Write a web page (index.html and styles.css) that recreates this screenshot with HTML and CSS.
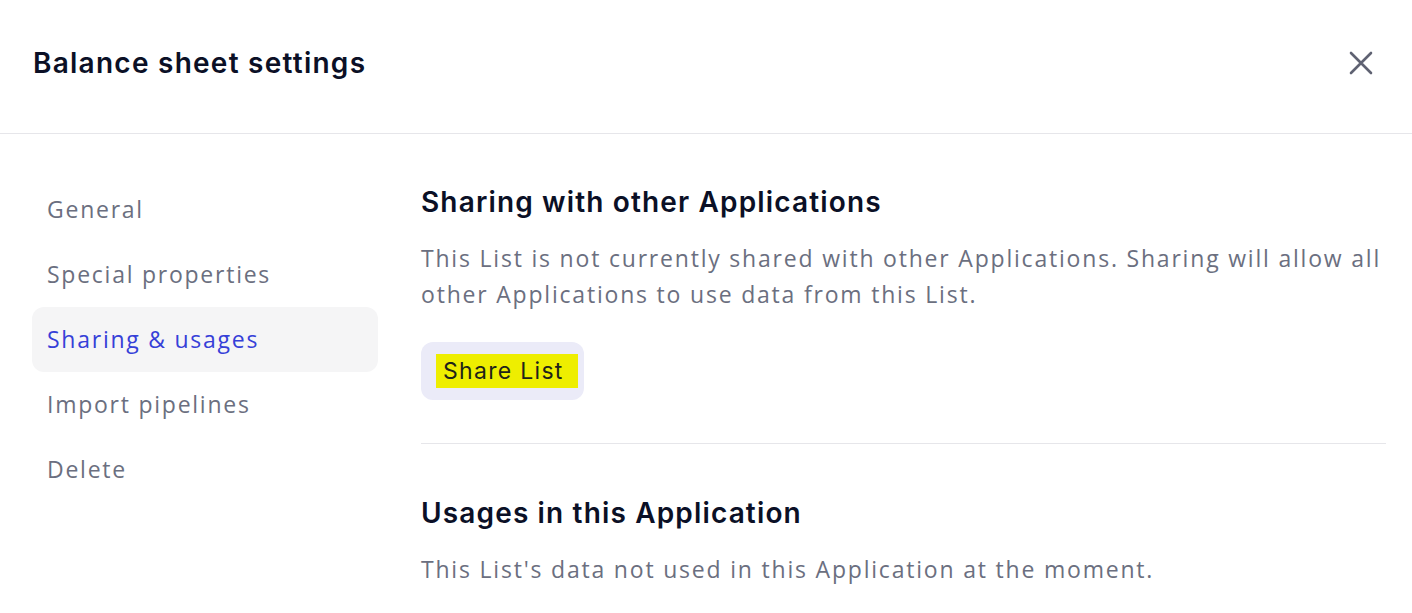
FILE: index.html
```html
<!DOCTYPE html>
<html>
<head>
    <title>Balance sheet settings</title>
    <link rel="stylesheet" href="styles.css">
</head>
<body>
    <div id="modal">
        <div id="header">
            <h1>Balance sheet settings</h1>
            <button id="close" aria-label="Close">
                <svg width="24" height="24" viewBox="0 0 24 24">
                    <path d="M2 2 L22 22 M22 2 L2 22" stroke="#5f6272" stroke-width="2.6" stroke-linecap="round" fill="none"/>
                </svg>
            </button>
        </div>
        <div id="body">
            <ul id="menu">
                <li>General</li>
                <li>Special properties</li>
                <li class="active">Sharing &amp; usages</li>
                <li>Import pipelines</li>
                <li>Delete</li>
            </ul>
            <div id="content">
                <h2>Sharing with other Applications</h2>
                <p>This List is not currently shared with other Applications. Sharing will allow all other Applications to use data from this List.</p>
                <button class="share-btn"><mark>Share List</mark></button>
                <hr>
                <h2 class="second">Usages in this Application</h2>
                <p>This List's data not used in this Application at the moment.</p>
            </div>
        </div>
    </div>
</body>
</html>
```

FILE: styles.css
```css
body {
    margin: 0;
    font-family: "Open Sans", sans-serif;
    background-color: white;
}
#header {
    display: flex;
    justify-content: space-between;
    align-items: center;
    height: 126px;
    padding: 0 39px 7px 33px;
    border-bottom: 1px solid #e6e6ea;
}
#header h1 {
    margin: 0;
    font-family: "Inter", sans-serif;
    font-weight: 600;
    font-size: 28px;
    letter-spacing: 1.25px;
    color: #0b1026;
}
#close {
    background: none;
    border: none;
    padding: 0;
    cursor: pointer;
    display: flex;
}
#body {
    display: flex;
    gap: 43px;
    padding: 43px 26px 0 32px;
}
#menu {
    list-style: none;
    margin: 0;
    padding: 0;
    width: 346px;
    flex-shrink: 0;
}
#menu li {
    height: 65px;
    line-height: 64px;
    padding: 0 15px;
    font-size: 23px;
    letter-spacing: 1.75px;
    color: #6b6f80;
    border-radius: 12px;
}
#menu li.active {
    background-color: #f5f5f6;
    color: #3640d8;
}
#content {
    flex: 1;
    padding-top: 7px;
}
#content h2 {
    margin: 0;
    font-family: "Inter", sans-serif;
    font-weight: 600;
    font-size: 28px;
    letter-spacing: 1.15px;
    line-height: 36px;
    color: #0b1026;
}
#content p {
    margin: 20px 0 0;
    font-size: 23px;
    letter-spacing: 1.8px;
    line-height: 36px;
    color: #6b6f80;
}
.share-btn {
    margin-top: 30px;
    height: 58px;
    padding: 0 6px 0 15px;
    background-color: #ebebf8;
    border: none;
    border-radius: 12px;
    font-family: "Inter", sans-serif;
    font-size: 23px;
    letter-spacing: 1.3px;
    color: #1c2230;
    cursor: pointer;
}
.share-btn mark {
    display: inline-block;
    background-color: #eeee00;
    color: #1e2419;
    padding: 3px 14px 3px 7px;
}
#content hr {
    margin: 43px 0 0;
    border: none;
    border-top: 1px solid #e6e6ea;
}
#content h2.second {
    margin-top: 51px;
}
```
